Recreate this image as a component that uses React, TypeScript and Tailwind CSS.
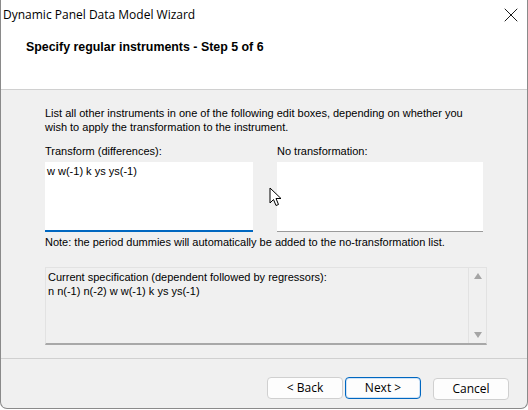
import { X } from 'lucide-react'

const body = "font-['Liberation_Sans',Arial,sans-serif] text-[11px] leading-[14px] text-black"

function Cursor() {
  return (
    <svg className="absolute left-[269px] top-[187px]" width="14" height="21" viewBox="0 0 14 21">
      <path
        d="M1 1 L1 16 L4.5 12.5 L7 18.5 L9.5 17.5 L7 11.5 L12 11.5 Z"
        fill="#ffffff"
        stroke="#000000"
        strokeWidth="1"
        strokeLinejoin="round"
      />
    </svg>
  )
}

function WizButton({ label, focused }: { label: string; focused?: boolean }) {
  return (
    <button
      className={`h-[22px] w-[76px] rounded-[4px] bg-[#fdfdfd] text-[12px] text-black font-['Open_Sans',sans-serif] leading-none ${
        focused ? 'border border-[#0067c0] shadow-[inset_0_0_0_1px_#cfe3f7]' : 'border border-[#d0d0d0]'
      }`}
    >
      {label}
    </button>
  )
}

export default function App() {
  return (
    <div className="relative w-[528px] h-[410px] overflow-hidden bg-white">
      <div className="w-[528px] h-[409px] flex flex-col bg-[#f0f0f0] border-l border-r border-b border-[#8a8a8a] rounded-b-[7px] overflow-hidden">
        {/* Header */}
        <div className="h-[90px] bg-white border-b border-[#d0d0d0] flex flex-col">
          <div className="h-[29px] flex items-center justify-between pl-[2px] pr-[4px]">
            <span className="font-['Open_Sans',sans-serif] text-[12px] text-black">Dynamic Panel Data Model Wizard</span>
            <X className="w-[24px] h-[24px] text-[#1a1a1a]" strokeWidth={1} />
          </div>
          <div className="pl-[25px] mt-[9px] font-['Liberation_Sans',Arial,sans-serif] font-bold text-[12.4px] text-black">
            Specify regular instruments - Step 5 of 6
          </div>
        </div>

        {/* Content */}
        <div className={`flex flex-col pl-[44px] pr-[41px] pt-[16px] ${body}`}>
          <p>
            List all other instruments in one of the following edit boxes, depending on whether you
            <br />
            wish to apply the transformation to the instrument.
          </p>

          <div className="flex gap-[24px] mt-[10px]">
            <div className="flex flex-col w-[208px]">
              <span>Transform (differences):</span>
              <div className="mt-[4px] h-[70px] bg-white border-b-2 border-[#0067c0] px-[2px] pt-[2px]">
                w w(-1) k ys ys(-1)
              </div>
            </div>
            <div className="flex flex-col w-[206px]">
              <span>No transformation:</span>
              <div className="mt-[4px] h-[70px] bg-white border-b border-[#9a9a9a]" />
            </div>
          </div>

          <p className="mt-[3px]">
            Note: the period dummies will automatically be added to the no-transformation list.
          </p>

          <div className="mt-[18px] h-[78px] w-[442px] flex border border-[#e2e2e2] border-b-2 border-b-[#a8a8a8] bg-[#f0f0f0]">
            <div className="flex-1 px-[2px] pt-[2px]">
              Current specification (dependent followed by regressors):
              <br />
              n n(-1) n(-2) w w(-1) k ys ys(-1)
            </div>
            <div className="w-[18px] border-l border-[#e2e2e2] flex flex-col items-center justify-between py-[5px]">
              <svg width="8" height="6" viewBox="0 0 8 6"><path d="M4 0 L8 6 L0 6 Z" fill="#a5a5a5" /></svg>
              <svg width="8" height="6" viewBox="0 0 8 6"><path d="M0 0 L8 0 L4 6 Z" fill="#a5a5a5" /></svg>
            </div>
          </div>
        </div>

        <div className="mt-[13px] border-t border-[#d0d0d0]" />

        {/* Buttons */}
        <div className="flex justify-end items-center pr-[18px] mt-[16px]">
          <div className="flex gap-[2px]">
            <WizButton label="< Back" />
            <WizButton label="Next >" focused />
          </div>
          <div className="ml-[12px]">
            <WizButton label="Cancel" />
          </div>
        </div>
      </div>
      <Cursor />
    </div>
  )
}
